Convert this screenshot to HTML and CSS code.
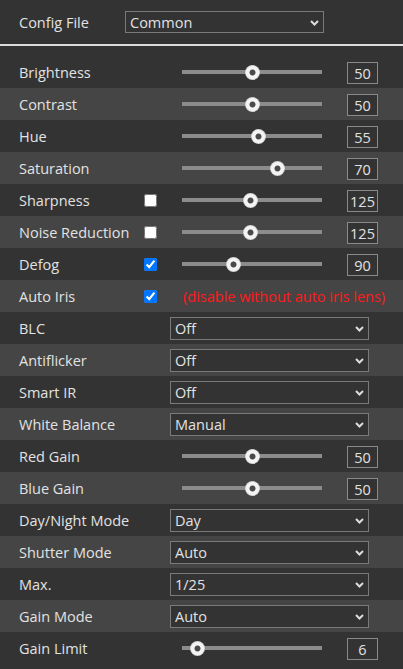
FILE: index.html
```html
<!DOCTYPE html>
<html>
<head>
<meta charset="utf-8">
<link rel="stylesheet" href="styles.css">
</head>
<body>
<div class="header">
  <span class="head-label">Config File</span>
  <div class="sel sel-config">
    <select><option>Common</option></select>
    <svg class="chev" width="9" height="6" viewBox="0 0 9 6"><path d="M1 1 L4.5 4.5 L8 1" fill="none" stroke="#ddd" stroke-width="2"/></svg>
  </div>
</div>
<div class="rule"></div>
<div class="rows">
  <div class="row"><span class="lbl">Brightness</span><span></span><div class="ctrl"><input class="rng" type="range" min="0" max="100" value="50"><span class="num">50</span></div></div>
  <div class="row"><span class="lbl">Contrast</span><span></span><div class="ctrl"><input class="rng" type="range" min="0" max="100" value="50"><span class="num">50</span></div></div>
  <div class="row"><span class="lbl">Hue</span><span></span><div class="ctrl"><input class="rng" type="range" min="0" max="100" value="55"><span class="num">55</span></div></div>
  <div class="row"><span class="lbl">Saturation</span><span></span><div class="ctrl"><input class="rng" type="range" min="0" max="100" value="70"><span class="num">70</span></div></div>
  <div class="row"><span class="lbl">Sharpness</span><input class="chk" type="checkbox"><div class="ctrl"><input class="rng" type="range" min="0" max="255" value="125"><span class="num">125</span></div></div>
  <div class="row"><span class="lbl">Noise Reduction</span><input class="chk" type="checkbox"><div class="ctrl"><input class="rng" type="range" min="0" max="255" value="125"><span class="num">125</span></div></div>
  <div class="row"><span class="lbl">Defog</span><input class="chk" type="checkbox" checked><div class="ctrl"><input class="rng" type="range" min="0" max="255" value="90"><span class="num">90</span></div></div>
  <div class="row"><span class="lbl">Auto Iris</span><input class="chk" type="checkbox" checked><div class="ctrl"><span class="warn">(disable without auto iris lens)</span></div></div>
  <div class="row"><span class="lbl">BLC</span><span></span><div class="sel"><select><option>Off</option></select><svg class="chev" width="9" height="6" viewBox="0 0 9 6"><path d="M1 1 L4.5 4.5 L8 1" fill="none" stroke="#ddd" stroke-width="2"/></svg></div></div>
  <div class="row"><span class="lbl">Antiflicker</span><span></span><div class="sel"><select><option>Off</option></select><svg class="chev" width="9" height="6" viewBox="0 0 9 6"><path d="M1 1 L4.5 4.5 L8 1" fill="none" stroke="#ddd" stroke-width="2"/></svg></div></div>
  <div class="row"><span class="lbl">Smart IR</span><span></span><div class="sel"><select><option>Off</option></select><svg class="chev" width="9" height="6" viewBox="0 0 9 6"><path d="M1 1 L4.5 4.5 L8 1" fill="none" stroke="#ddd" stroke-width="2"/></svg></div></div>
  <div class="row"><span class="lbl">White Balance</span><span></span><div class="sel"><select><option>Manual</option></select><svg class="chev" width="9" height="6" viewBox="0 0 9 6"><path d="M1 1 L4.5 4.5 L8 1" fill="none" stroke="#ddd" stroke-width="2"/></svg></div></div>
  <div class="row"><span class="lbl">Red Gain</span><span></span><div class="ctrl"><input class="rng" type="range" min="0" max="100" value="50"><span class="num">50</span></div></div>
  <div class="row"><span class="lbl">Blue Gain</span><span></span><div class="ctrl"><input class="rng" type="range" min="0" max="100" value="50"><span class="num">50</span></div></div>
  <div class="row"><span class="lbl">Day/Night Mode</span><span></span><div class="sel"><select><option>Day</option></select><svg class="chev" width="9" height="6" viewBox="0 0 9 6"><path d="M1 1 L4.5 4.5 L8 1" fill="none" stroke="#ddd" stroke-width="2"/></svg></div></div>
  <div class="row"><span class="lbl">Shutter Mode</span><span></span><div class="sel"><select><option>Auto</option></select><svg class="chev" width="9" height="6" viewBox="0 0 9 6"><path d="M1 1 L4.5 4.5 L8 1" fill="none" stroke="#ddd" stroke-width="2"/></svg></div></div>
  <div class="row"><span class="lbl">Max.</span><span></span><div class="sel"><select><option>1/25</option></select><svg class="chev" width="9" height="6" viewBox="0 0 9 6"><path d="M1 1 L4.5 4.5 L8 1" fill="none" stroke="#ddd" stroke-width="2"/></svg></div></div>
  <div class="row"><span class="lbl">Gain Mode</span><span></span><div class="sel"><select><option>Auto</option></select><svg class="chev" width="9" height="6" viewBox="0 0 9 6"><path d="M1 1 L4.5 4.5 L8 1" fill="none" stroke="#ddd" stroke-width="2"/></svg></div></div>
  <div class="row"><span class="lbl">Gain Limit</span><span></span><div class="ctrl"><input class="rng" type="range" min="0" max="100" value="6"><span class="num">6</span></div></div>
</div>
</body>
</html>
```
FILE: styles.css
```css
html, body {
  margin: 0;
  padding: 0;
  background: #333333;
  color: #e2e2e2;
  font-family: "Open Sans", "Noto Sans", sans-serif;
  font-size: 14.5px;
  overflow: hidden;
}
.header {
  height: 44px;
  display: flex;
  align-items: center;
  padding-left: 19px;
}
.head-label {
  width: 106px;
}
.rule {
  height: 2px;
  background: #dcdcdc;
  margin-bottom: 10px;
}
.rows {
  display: flex;
  flex-direction: column;
}
.row {
  height: 32px;
  display: grid;
  grid-template-columns: 125px 26px 1fr;
  align-items: center;
  padding-left: 19px;
  background: #333333;
}
.row:nth-child(even) {
  background: #454545;
}
.lbl {
  white-space: nowrap;
}
.chk {
  margin: 0;
  width: 13px;
  height: 13px;
  accent-color: #0075ff;
}
.ctrl {
  display: flex;
  align-items: center;
}
.rng {
  -webkit-appearance: none;
  appearance: none;
  margin: 0 0 0 12px;
  width: 140px;
  height: 16px;
  background: transparent;
}
.rng::-webkit-slider-runnable-track {
  height: 4px;
  background: #8c8c8c;
}
.rng::-webkit-slider-thumb {
  -webkit-appearance: none;
  width: 15px;
  height: 15px;
  margin-top: -5.5px;
  border-radius: 50%;
  background: radial-gradient(circle, #4a4a4a 0 2.6px, #f4f4f4 3.4px 6px, #c8c8c8 7.5px);
}
.num {
  margin-left: 25px;
  margin-top: 2px;
  box-sizing: border-box;
  width: 31px;
  height: 22px;
  border: 1px solid #8a8a8a;
  background: #333333;
  display: flex;
  align-items: center;
  justify-content: center;
  color: #e2e2e2;
}
.warn {
  margin-left: 13px;
  color: #ff1a1a;
  white-space: nowrap;
}
.sel {
  position: relative;
  width: 199px;
  height: 23px;
}
.sel select {
  -webkit-appearance: none;
  appearance: none;
  box-sizing: border-box;
  width: 100%;
  height: 100%;
  margin: 0;
  border: 1px solid #7a7a7a;
  border-radius: 0;
  background: #333333;
  color: #e2e2e2;
  font-family: inherit;
  font-size: 14.5px;
  padding: 0 0 0 4px;
  outline: none;
}
.sel-config {
  height: 22px;
}
.chev {
  position: absolute;
  right: 5px;
  top: 9px;
  pointer-events: none;
}
```
